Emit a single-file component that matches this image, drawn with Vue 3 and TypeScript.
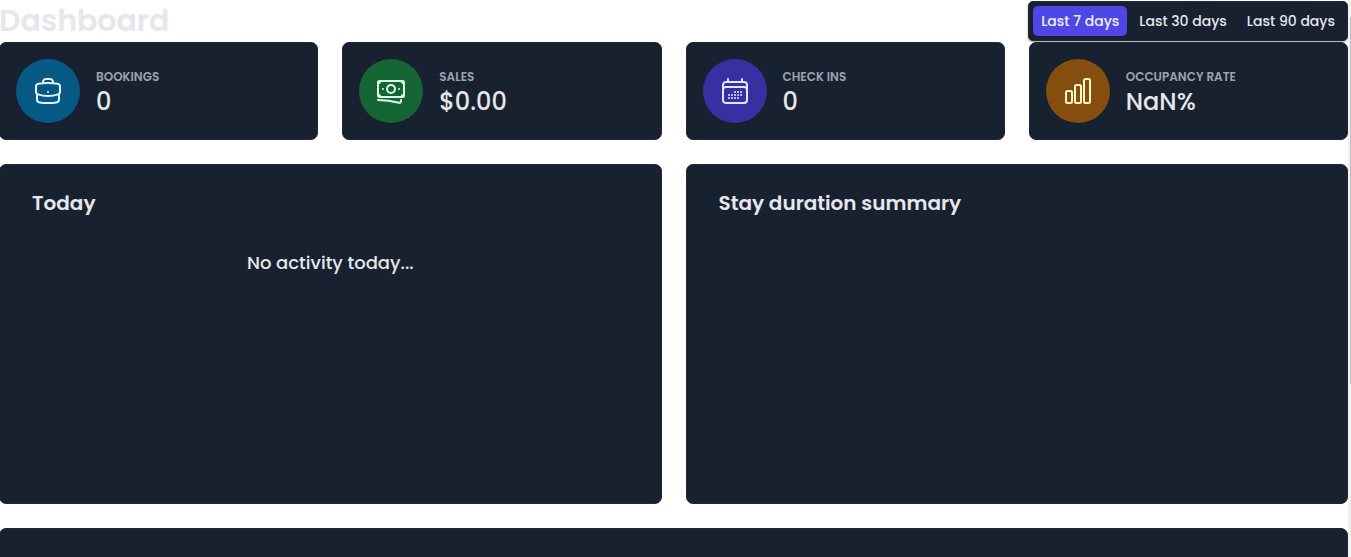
<script setup lang="ts">
import { ref } from 'vue'

interface Stat {
  title: string
  value: string
  tone: string
  icon: string
}

const ranges = [7, 30, 90]
const active = ref<number>(7)

const stats: Stat[] = [
  {
    title: 'Bookings',
    value: '0',
    tone: 'blue',
    icon: 'M20.25 14.15v4.25c0 1.094-.787 2.036-1.872 2.18-2.087.277-4.216.42-6.378.42s-4.291-.143-6.378-.42c-1.085-.144-1.872-1.086-1.872-2.18v-4.25m16.5 0a2.18 2.18 0 0 0 .75-1.661V8.706c0-1.081-.768-2.015-1.837-2.175a48.114 48.114 0 0 0-3.413-.387m4.5 8.006c-.194.165-.42.295-.673.38A23.978 23.978 0 0 1 12 15.75c-2.648 0-5.195-.429-7.577-1.22a2.016 2.016 0 0 1-.673-.38m0 0A2.18 2.18 0 0 1 3 12.489V8.706c0-1.081.768-2.015 1.837-2.175a48.111 48.111 0 0 1 3.413-.387m7.5 0V5.25A2.25 2.25 0 0 0 13.5 3h-3a2.25 2.25 0 0 0-2.25 2.25v.894m7.5 0a48.667 48.667 0 0 0-7.5 0M12 12.75h.008v.008H12v-.008Z',
  },
  {
    title: 'Sales',
    value: '$0.00',
    tone: 'green',
    icon: 'M2.25 18.75a60.07 60.07 0 0 1 15.797 2.101c.727.198 1.453-.342 1.453-1.096V18.75M3.75 4.5v.75A.75.75 0 0 1 3 6h-.75m0 0v-.375c0-.621.504-1.125 1.125-1.125H20.25M2.25 6v9m18-10.5v.75c0 .414.336.75.75.75h.75m-1.5-1.5h.375c.621 0 1.125.504 1.125 1.125v9.75c0 .621-.504 1.125-1.125 1.125h-.375m1.5-1.5H21a.75.75 0 0 0-.75.75v.75m0 0H3.75m0 0h-.375a1.125 1.125 0 0 1-1.125-1.125V15m1.5 1.5v-.75A.75.75 0 0 0 3 15h-.75M15 10.5a3 3 0 1 1-6 0 3 3 0 0 1 6 0Zm3 0h.008v.008H18V10.5Zm-12 0h.008v.008H6V10.5Z',
  },
  {
    title: 'Check ins',
    value: '0',
    tone: 'indigo',
    icon: 'M6.75 3v2.25M17.25 3v2.25M3 18.75V7.5a2.25 2.25 0 0 1 2.25-2.25h13.5A2.25 2.25 0 0 1 21 7.5v11.25m-18 0A2.25 2.25 0 0 0 5.25 21h13.5A2.25 2.25 0 0 0 21 18.75m-18 0v-7.5A2.25 2.25 0 0 1 5.25 9h13.5A2.25 2.25 0 0 1 21 11.25v7.5m-9-6h.008v.008H12v-.008ZM12 15h.008v.008H12V15Zm0 2.25h.008v.008H12v-.008ZM9.75 15h.008v.008H9.75V15Zm0 2.25h.008v.008H9.75v-.008ZM7.5 15h.008v.008H7.5V15Zm0 2.25h.008v.008H7.5v-.008Zm6.75-4.5h.008v.008h-.008v-.008Zm0 2.25h.008v.008h-.008V15Zm0 2.25h.008v.008h-.008v-.008Zm2.25-4.5h.008v.008H16.5v-.008Zm0 2.25h.008v.008H16.5V15Z',
  },
  {
    title: 'Occupancy rate',
    value: 'NaN%',
    tone: 'yellow',
    icon: 'M3 13.125C3 12.504 3.504 12 4.125 12h2.25c.621 0 1.125.504 1.125 1.125v6.75C7.5 20.496 6.996 21 6.375 21h-2.25A1.125 1.125 0 0 1 3 19.875v-6.75ZM9.75 8.625c0-.621.504-1.125 1.125-1.125h2.25c.621 0 1.125.504 1.125 1.125v11.25c0 .621-.504 1.125-1.125 1.125h-2.25a1.125 1.125 0 0 1-1.125-1.125V8.625ZM16.5 4.125c0-.621.504-1.125 1.125-1.125h2.25C20.496 3 21 3.504 21 4.125v15.75c0 .621-.504 1.125-1.125 1.125h-2.25a1.125 1.125 0 0 1-1.125-1.125V4.125Z',
  },
]
</script>

<template>
  <div class="shell">
    <main class="page">
      <header class="top">
        <h1>Dashboard</h1>
        <div class="filter">
          <button
            v-for="days in ranges"
            :key="days"
            type="button"
            :class="{ active: active === days }"
            :aria-pressed="active === days"
            @click="active = days"
          >Last {{ days }} days</button>
        </div>
      </header>

      <div class="grid">
        <section v-for="s in stats" :key="s.title" class="card stat">
          <div class="badge" :class="s.tone">
            <svg viewBox="0 0 24 24" aria-hidden="true"><path :d="s.icon" /></svg>
          </div>
          <div class="figures">
            <h5>{{ s.title }}</h5>
            <p class="value">{{ s.value }}</p>
          </div>
        </section>

        <section class="card panel">
          <h2>Today</h2>
          <p class="empty">No activity today...</p>
        </section>
        <section class="card panel">
          <h2>Stay duration summary</h2>
        </section>
        <section class="card chart"></section>
      </div>
    </main>
    <div class="track" aria-hidden="true"><div class="thumb"></div></div>
  </div>
</template>

<style>
body {
  margin: 0;
  background: #fff;
}
</style>

<style scoped>
.shell {
  display: flex;
  height: 100vh;
  overflow: hidden;
  font-family: Poppins, Inter, 'Liberation Sans', sans-serif;
  color: #e5e7eb;
}
.page {
  flex: 1;
  min-width: 0;
  margin-left: -1px;
}
.top {
  display: flex;
  justify-content: space-between;
  align-items: center;
  padding-top: 1px;
}
h1, h2, h5, p {
  margin: 0;
}
h1 {
  font-size: 30px;
  line-height: 40px;
  font-weight: 600;
}
.filter {
  display: flex;
  gap: 4px;
  box-sizing: border-box;
  height: 40px;
  padding: 4px;
  border: 1px solid #1f2937;
  border-radius: 5px;
  background: #18212f;
  box-shadow: 0 1px 2px rgba(0, 0, 0, 0.4);
}
.filter button {
  padding: 0 8px;
  border: 0;
  border-radius: 5px;
  background: transparent;
  color: #e5e7eb;
  font-family: inherit;
  font-size: 14px;
  line-height: 30px;
  font-weight: 500;
  white-space: nowrap;
}
.filter button.active {
  background: #4f46e5;
  color: #eef2ff;
}
.grid {
  display: grid;
  grid-template-columns: repeat(4, minmax(0, 1fr));
  grid-template-rows: auto 340px auto;
  gap: 24px;
  padding-top: 1px;
}
.card {
  box-sizing: border-box;
  border: 1px solid #1f2937;
  border-radius: 7px;
  background: #18212f;
}
.stat {
  display: flex;
  align-items: center;
  gap: 16px;
  padding: 16px;
}
.badge {
  display: flex;
  flex: none;
  align-items: center;
  justify-content: center;
  width: 64px;
  height: 64px;
  border-radius: 50%;
}
.badge svg {
  width: 32px;
  height: 32px;
  fill: none;
  stroke: currentColor;
  stroke-width: 1.5;
  stroke-linecap: round;
  stroke-linejoin: round;
}
.blue { background: #075985; color: #e0f2fe; }
.green { background: #166534; color: #dcfce7; }
.indigo { background: #3730a3; color: #e0e7ff; }
.yellow { background: #854d0e; color: #fef9c3; }
.figures {
  padding-top: 4px;
}
h5 {
  color: #9ca3af;
  font-size: 12px;
  line-height: 18px;
  font-weight: 600;
  text-transform: uppercase;
}
.value {
  font-size: 24px;
  line-height: 32px;
  font-weight: 500;
}
.panel {
  grid-column: span 2;
  padding: 24px 32px;
}
h2 {
  font-size: 20px;
  line-height: 28px;
  font-weight: 600;
}
.empty {
  margin-top: 32px;
  text-align: center;
  font-size: 18px;
  line-height: 28px;
  font-weight: 500;
}
.chart {
  grid-column: 1 / -1;
  min-height: 360px;
}
.track {
  display: flex;
  justify-content: flex-end;
  width: 3px;
  padding-top: 17px;
  box-sizing: border-box;
  background: #f1f1f1;
}
.thumb {
  width: 1px;
  height: 68%;
  background: #c1c1c1;
}
</style>
